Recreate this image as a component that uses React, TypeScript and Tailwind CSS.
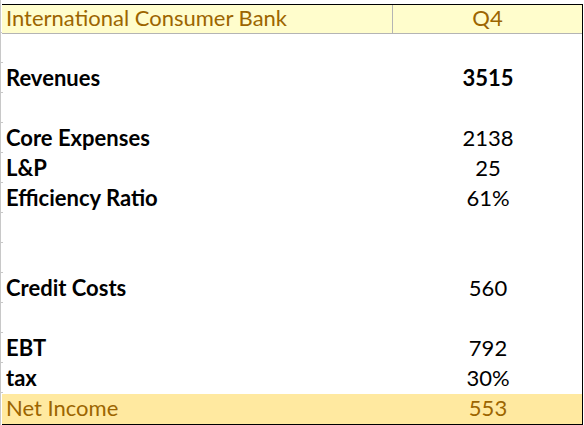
const rows: { label: string; value: string; boldValue?: boolean }[] = [
  { label: "", value: "" },
  { label: "Revenues", value: "3515", boldValue: true },
  { label: "", value: "" },
  { label: "Core Expenses", value: "2138" },
  { label: "L&P", value: "25" },
  { label: "Efficiency Ratio", value: "61%" },
  { label: "", value: "" },
  { label: "", value: "" },
  { label: "Credit Costs", value: "560" },
  { label: "", value: "" },
  { label: "EBT", value: "792" },
  { label: "tax", value: "30%" },
];

export default function App() {
  return (
    <div
      className="w-[584px] h-[425px] bg-white pt-[4px] flex text-[22px] leading-none"
      style={{ fontFamily: "Lato, 'Liberation Sans', sans-serif" }}
    >
      {/* edge of the neighbouring column */}
      <div className="w-[2px] flex flex-col border-l border-[#c8c8c8] -mt-[4px]">
        <div className="h-[33px] border-b border-[#c8c8c8]" />
        {rows.map((_, i) => (
          <div key={i} className="h-[30px] border-b border-[#c8c8c8] w-[2px]" />
        ))}
      </div>

      <div className="w-[581px] h-[421px] border-t border-b border-r border-black flex flex-col">
        {/* header */}
        <div className="flex h-[29px] bg-[#fffdcc] border-b border-[#b4b4b4] text-[#9c6500]">
          <div className="w-[391px] border-r border-[#b4b4b4] flex items-center pl-[4px] pb-[2px]">
            International Consumer Bank
          </div>
          <div className="flex-1 flex items-center justify-center pb-[2px]">Q4</div>
        </div>

        {rows.map((r, i) => (
          <div key={i} className="flex h-[30px] text-black">
            <div className="w-[392px] flex items-center pl-[4px] pb-[2px] font-bold">{r.label}</div>
            <div className={`flex-1 flex items-center justify-center pb-[2px] ${r.boldValue ? "font-bold" : ""}`}>
              {r.value}
            </div>
          </div>
        ))}

        {/* net income */}
        <div className="flex flex-1 bg-[#ffe9a0] text-[#9c6500]">
          <div className="w-[392px] flex items-center pl-[4px] pb-[2px]">Net Income</div>
          <div className="flex-1 flex items-center justify-center pb-[2px]">553</div>
        </div>
      </div>
    </div>
  );
}
